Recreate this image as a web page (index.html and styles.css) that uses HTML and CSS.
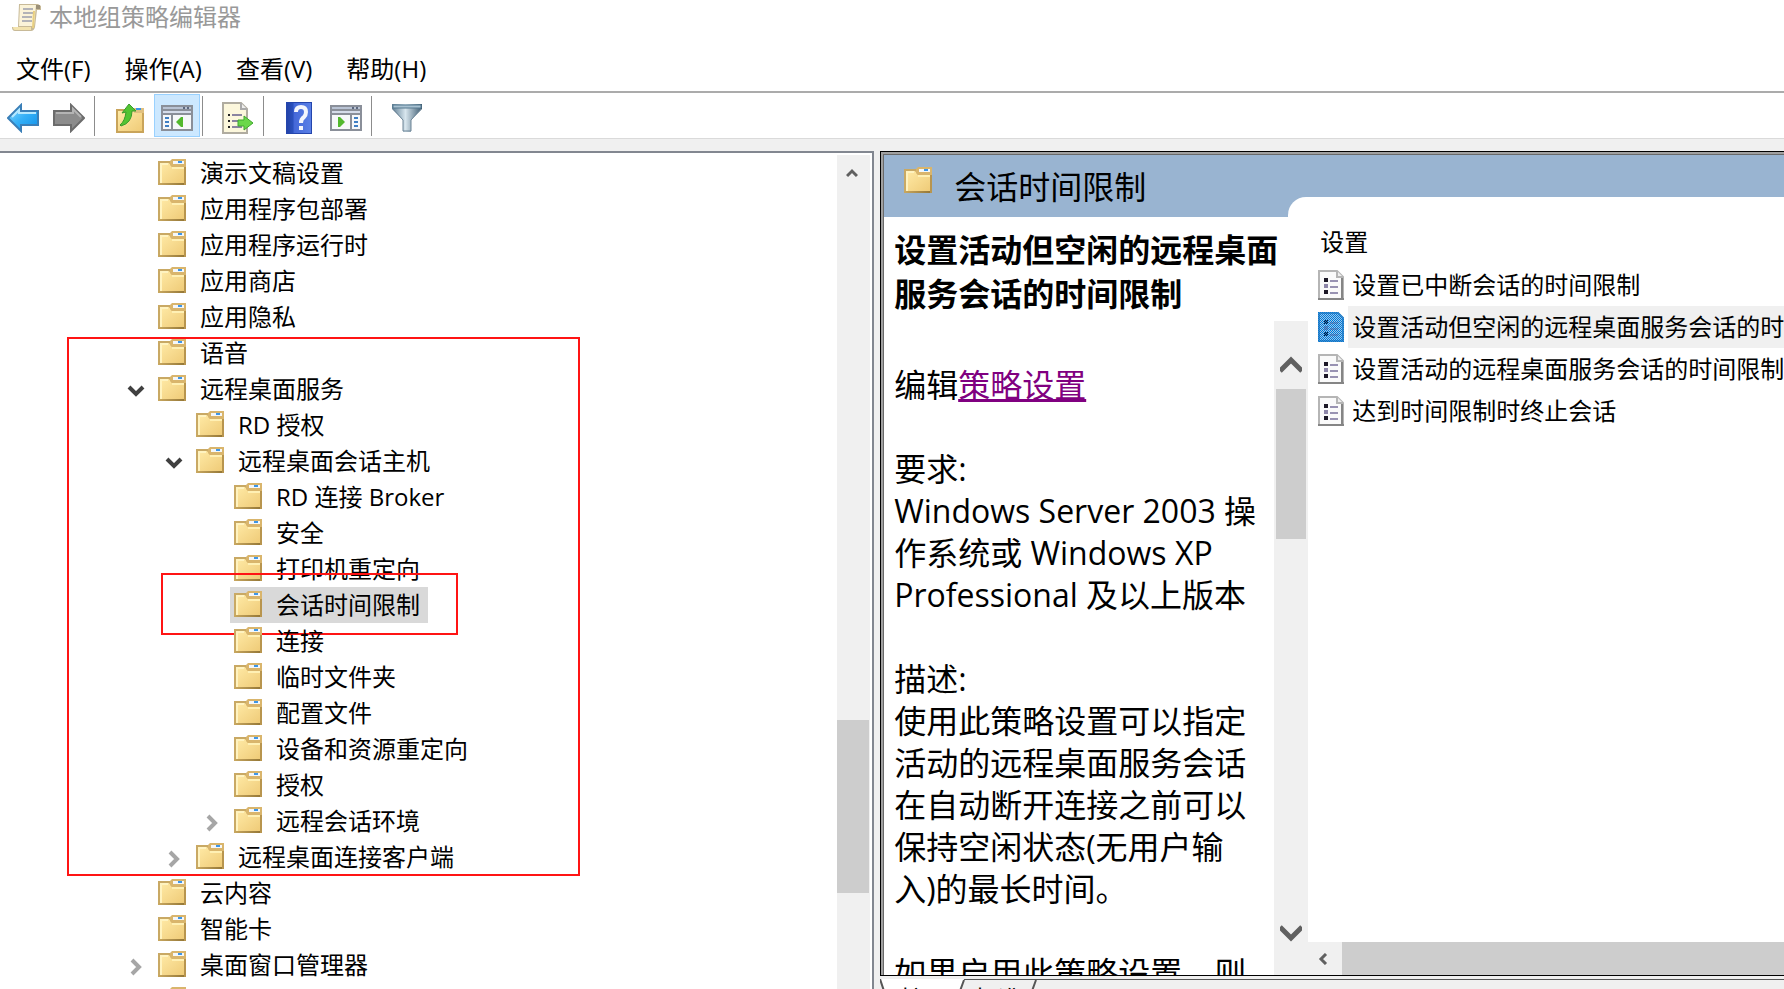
FILE: index.html
```
<!DOCTYPE html>
<html lang="zh-CN">
<head>
<meta charset="utf-8">
<title>本地组策略编辑器</title>
<link rel="stylesheet" href="styles.css">
</head>
<body>
<svg class="defs" aria-hidden="true">
  <defs>
    <linearGradient id="gFolder" x1="0" y1="0" x2="1" y2="1"><stop offset="0" stop-color="#ffeaa6"/><stop offset="1" stop-color="#efcb78"/></linearGradient>
    <linearGradient id="gEdge" x1="0" y1="0" x2="1" y2="0"><stop offset="0" stop-color="#c9a860"/><stop offset="1" stop-color="#917434"/></linearGradient>
    <linearGradient id="gBlue" x1="0" y1="0" x2="1" y2="1"><stop offset="0" stop-color="#8fdcff"/><stop offset=".5" stop-color="#35b0f7"/><stop offset="1" stop-color="#0f8fe8"/></linearGradient>
    <linearGradient id="gHelp" x1="0" y1="0" x2="1" y2="0"><stop offset="0" stop-color="#2343a8"/><stop offset=".25" stop-color="#2a50bd"/><stop offset=".3" stop-color="#4468d8"/><stop offset="1" stop-color="#5a80e6"/></linearGradient>
    <linearGradient id="gSteel" x1="0" y1="0" x2="1" y2="0"><stop offset="0" stop-color="#5f7e94"/><stop offset=".45" stop-color="#d8e6ee"/><stop offset="1" stop-color="#3c5a70"/></linearGradient>
    <symbol id="folder" viewBox="0 0 28 26">
      <path d="M0 2H12V6H28V26H0Z" fill="#c9a964"/>
      <path d="M2 4H11L14 8H26V24H2Z" fill="url(#gFolder)"/>
      <path d="M2 4H10V6H4V24H2Z" fill="#fff3c0"/>
      <path d="M12 2L14 0H28V8H14L12 6Z" fill="#d9b56c"/>
      <path d="M15 2H26V5H15Z" fill="#f5f7f8"/><path d="M20 2H24V4H20Z" fill="#3d96e8"/>
      <path d="M14 8H26V10H14Z" fill="#fff0b4"/>
      <path d="M0 24H28V26H0Z" fill="url(#gEdge)"/><path d="M26 8H28V26H26Z" fill="#b8954e"/>
    </symbol>
    <symbol id="down" viewBox="0 0 18 12"><path d="M2 2L9 9L16 2" fill="none" stroke="#404040" stroke-width="4"/></symbol>
    <symbol id="right" viewBox="0 0 12 18"><path d="M2 2L9 9L2 16" fill="none" stroke="#a6a6a6" stroke-width="4"/></symbol>
    <symbol id="sheet" viewBox="0 0 26 30">
      <path d="M1 1H19L25 7V29H1Z" fill="#fafafa" stroke="#b5b5b5" stroke-width="2"/>
      <path d="M24 7V29M0 29H26" fill="none" stroke="#858585" stroke-width="2"/>
      <path d="M19 1V7H25" fill="#eee" stroke="#b5b5b5" stroke-width="2"/>
      <path d="M6 8H10V12H6ZM6 20H10V24H6Z" fill="#1c1826"/><path d="M6 14H10V18H6Z" fill="#8d86a8"/>
      <path d="M12 11H20M12 17H20M12 23H20" stroke="#9892b2" stroke-width="2"/>
    </symbol>
    <pattern id="dither" width="2" height="2" patternUnits="userSpaceOnUse"><path d="M0 0H1V1H0ZM1 1H2V2H1Z" fill="#0078d7"/></pattern>
    <symbol id="sheetOn" viewBox="0 0 26 30">
      <path d="M0 0H20L26 6V30H0Z" fill="#9cc8ea"/>
      <path d="M1 1H20L25 6V29H1Z" fill="none" stroke="#4a8cc4" stroke-width="2"/>
      <path d="M6 8H10V12H6ZM6 20H10V24H6Z" fill="#1c1826"/><path d="M6 14H10V18H6Z" fill="#8d86a8"/>
      <path d="M12 11H20M12 17H20M12 23H20" stroke="#9892b2" stroke-width="2"/>
      <path d="M0 0H20L26 6V30H0Z" fill="url(#dither)"/>
    </symbol>
    <symbol id="frame" viewBox="0 0 32 26">
      <path d="M0 0H32V26H0Z" fill="#8a8f99"/><path d="M2 2H30V4H2Z" fill="#b9c3d4"/>
      <path d="M22 2H24V4H22ZM26 2H28V4H26Z" fill="#5c6880"/>
      <path d="M2 6H30V8H2Z" fill="#d5dcea"/><path d="M2 10H30V24H2Z" fill="#f6f8fa"/>
    </symbol>
  </defs>
</svg>

<div class="window">
  <header class="titlebar">
    <svg class="app-icon" width="30" height="30" viewBox="0 0 30 30" aria-hidden="true">
      <path d="M7 2H26L29 4V8H25L23 25Q22 29 19 29H3Q0 29 0 25H6Z" fill="#c8ba98"/>
      <path d="M8 3H24L22 24H7Z" fill="#fbf3d8"/>
      <path d="M11 7H21M11 11H21M10 15H20M10 19H20" stroke="#b3b3b8" stroke-width="2"/>
      <path d="M1 25H19V28H3Q1 28 1 25Z" fill="#f3e3ae"/><path d="M24 3L28 3V7H24Z" fill="#9b9078"/>
      <path d="M22 9L21 26" stroke="#e8cf80" stroke-width="2"/>
    </svg>
    <h1>本地组策略编辑器</h1>
  </header>
  <nav class="menubar">
    <button>文件(F)</button><button>操作(A)</button><button>查看(V)</button><button>帮助(H)</button>
  </nav>
  <div class="toolbar" role="toolbar">
    <button aria-label="后退"><svg width="32" height="30" viewBox="0 0 32 30"><path d="M1 15L14 2V8H31V22H14V28Z" fill="url(#gBlue)" stroke="#3a7fb8" stroke-width="2"/><path d="M5 14L12 7V10H29" fill="none" stroke="#b6e8ff" stroke-width="2"/></svg></button>
    <button aria-label="前进"><svg width="32" height="30" viewBox="0 0 32 30"><path d="M31 15L18 2V8H1V22H18V28Z" fill="#8c8c8c" stroke="#6c6c6c" stroke-width="2"/><path d="M3 10H20V6L28 14" fill="none" stroke="#b4b4b4" stroke-width="2"/></svg></button>
    <span class="sep"></span>
    <button aria-label="上一级"><svg width="28" height="30" viewBox="0 0 28 30"><path d="M0 6H28V30H0Z" fill="#c9a45a"/><path d="M2 8H26V28H2Z" fill="url(#gFolder)"/><path d="M18 5H28V10H18Z" fill="#e0c080"/><path d="M20 5H25V7H20Z" fill="#3d96e8"/><path d="M4 22Q9 18 10 9L6 10L13 1L20 8L16 8Q16 20 5 23Z" fill="#52c432" stroke="#3a9a2c"/></svg></button>
    <button class="on" aria-label="显示控制台树" aria-pressed="true"><svg width="32" height="26" viewBox="0 0 32 26"><use href="#frame"/><path d="M10 10H12V24H10Z" fill="#8a8f99"/><path d="M4 13H8M4 17H8M4 21H8" stroke="#3f7fc4" stroke-width="2"/><path d="M22 12V22H20L15 17L20 12Z" fill="#52b82e"/></svg></button>
    <span class="sep"></span>
    <button aria-label="导出列表"><svg width="32" height="32" viewBox="0 0 32 32"><path d="M1 1H19L25 7V31H1Z" fill="#fcf7dc" stroke="#b0aca0" stroke-width="2"/><path d="M19 1V7H25" fill="#eee" stroke="#aaa" stroke-width="2"/><path d="M6 12H8V14H6ZM6 18H8V20H6ZM6 24H8V26H6Z" fill="#222"/><path d="M10 13H20M10 19H18M10 25H20" stroke="#8a84a0" stroke-width="2"/><path d="M16 18H22V14L31 21L22 28V24H16Z" fill="#6bd84a" stroke="#3fa82e"/></svg></button>
    <span class="sep"></span>
    <button aria-label="帮助"><svg width="26" height="32" viewBox="0 0 26 32"><path d="M0 0H26V32H0Z" fill="#2445ac"/><path d="M1 1H25V31H1Z" fill="url(#gHelp)"/><path d="M10 10Q10 5 15 5Q20 5 20 10Q20 13 18 15Q15 17 15 21" fill="none" stroke="#f4f6fc" stroke-width="4"/><path d="M13 24H17V28H13Z" fill="#f4f6fc"/></svg></button>
    <button aria-label="显示操作窗格"><svg width="32" height="26" viewBox="0 0 32 26"><use href="#frame"/><path d="M20 10H22V24H20Z" fill="#8a8f99"/><path d="M24 13H28M24 17H28M24 21H28" stroke="#3f7fc4" stroke-width="2"/><path d="M8 12V22H10L15 17L10 12Z" fill="#52b82e"/></svg></button>
    <span class="sep"></span>
    <button aria-label="筛选器"><svg width="30" height="28" viewBox="0 0 30 28"><path d="M0 0H30V5L19 16V28H11V16L0 5Z" fill="url(#gSteel)"/><path d="M1 1H29V4H1Z" fill="#a9c2d2" stroke="#55788f"/><path d="M1 5L11 16V27H19V16L29 5" fill="none" stroke="#6c8496"/></svg></button>
  </div>

  <main class="body">
    <section class="tree-pane">
      <div class="tree-view">
        <ul class="tree">
          <li><div class="row"><svg class="folder"><use href="#folder"/></svg><span>演示文稿设置</span></div></li>
          <li><div class="row"><svg class="folder"><use href="#folder"/></svg><span>应用程序包部署</span></div></li>
          <li><div class="row"><svg class="folder"><use href="#folder"/></svg><span>应用程序运行时</span></div></li>
          <li><div class="row"><svg class="folder"><use href="#folder"/></svg><span>应用商店</span></div></li>
          <li><div class="row"><svg class="folder"><use href="#folder"/></svg><span>应用隐私</span></div></li>
          <li><div class="row"><svg class="folder"><use href="#folder"/></svg><span>语音</span></div></li>
          <li><div class="row"><button class="toggle" aria-label="折叠"><svg width="18" height="12"><use href="#down"/></svg></button><svg class="folder"><use href="#folder"/></svg><span>远程桌面服务</span></div>
            <ul>
              <li><div class="row"><svg class="folder"><use href="#folder"/></svg><span>RD 授权</span></div></li>
              <li><div class="row"><button class="toggle" aria-label="折叠"><svg width="18" height="12"><use href="#down"/></svg></button><svg class="folder"><use href="#folder"/></svg><span>远程桌面会话主机</span></div>
                <ul>
                  <li><div class="row"><svg class="folder"><use href="#folder"/></svg><span>RD 连接 Broker</span></div></li>
                  <li><div class="row"><svg class="folder"><use href="#folder"/></svg><span>安全</span></div></li>
                  <li><div class="row"><svg class="folder"><use href="#folder"/></svg><span>打印机重定向</span></div></li>
                  <li><div class="row selected"><svg class="folder"><use href="#folder"/></svg><span>会话时间限制</span><i class="mark mark-item"></i></div></li>
                  <li><div class="row"><svg class="folder"><use href="#folder"/></svg><span>连接</span></div></li>
                  <li><div class="row"><svg class="folder"><use href="#folder"/></svg><span>临时文件夹</span></div></li>
                  <li><div class="row"><svg class="folder"><use href="#folder"/></svg><span>配置文件</span></div></li>
                  <li><div class="row"><svg class="folder"><use href="#folder"/></svg><span>设备和资源重定向</span></div></li>
                  <li><div class="row"><svg class="folder"><use href="#folder"/></svg><span>授权</span></div></li>
                  <li><div class="row"><button class="toggle" aria-label="展开"><svg width="12" height="18"><use href="#right"/></svg></button><svg class="folder"><use href="#folder"/></svg><span>远程会话环境</span></div></li>
                </ul>
              </li>
              <li><div class="row"><button class="toggle" aria-label="展开"><svg width="12" height="18"><use href="#right"/></svg></button><svg class="folder"><use href="#folder"/></svg><span>远程桌面连接客户端</span></div></li>
            </ul>
          </li>
          <li><div class="row"><svg class="folder"><use href="#folder"/></svg><span>云内容</span></div></li>
          <li><div class="row"><svg class="folder"><use href="#folder"/></svg><span>智能卡</span></div></li>
          <li><div class="row"><button class="toggle" aria-label="展开"><svg width="12" height="18"><use href="#right"/></svg></button><svg class="folder"><use href="#folder"/></svg><span>桌面窗口管理器</span></div></li>
          <li><div class="row"><svg class="folder"><use href="#folder"/></svg></div></li>
        </ul>
        <i class="mark mark-group"></i>
      </div>
      <div class="vscroll tree-scroll">
        <button aria-label="向上滚动"><svg width="12" height="10" viewBox="0 0 12 10"><path d="M1 8L6 3L11 8" fill="none" stroke="#606060" stroke-width="3"/></svg></button>
        <div class="thumb"></div>
      </div>
    </section>

    <section class="result-pane">
      <div class="frame">
        <div class="banner"><svg class="folder"><use href="#folder"/></svg><h2>会话时间限制</h2></div>
        <div class="content">
          <article class="detail">
            <h3>设置活动但空闲的远程桌面<br>服务会话的时间限制</h3>
            <div class="detail-body">
              <div class="detail-text">
                <p>编辑<a href="#edit">策略设置</a></p>
                <p>要求:<br>Windows Server 2003 操<br>作系统或 Windows XP<br>Professional 及以上版本</p>
                <p>描述:<br>使用此策略设置可以指定<br>活动的远程桌面服务会话<br>在自动断开连接之前可以<br>保持空闲状态(无用户输<br>入)的最长时间。</p>
                <p>如果启用此策略设置，则</p>
              </div>
              <div class="vscroll detail-scroll">
                <button aria-label="向上滚动"><svg width="22" height="18" viewBox="0 0 22 18"><path d="M0 15L11 4L22 15" fill="none" stroke="#606060" stroke-width="5"/></svg></button>
                <div class="thumb"></div>
                <button aria-label="向下滚动"><svg width="22" height="18" viewBox="0 0 22 18"><path d="M0 3L11 14L22 3" fill="none" stroke="#606060" stroke-width="5"/></svg></button>
              </div>
            </div>
          </article>
          <div class="settings">
            <h4>设置</h4>
            <ul>
              <li><svg class="sheet"><use href="#sheet"/></svg><span>设置已中断会话的时间限制</span></li>
              <li class="selected"><svg class="sheet"><use href="#sheetOn"/></svg><span>设置活动但空闲的远程桌面服务会话的时间限制</span></li>
              <li><svg class="sheet"><use href="#sheet"/></svg><span>设置活动的远程桌面服务会话的时间限制</span></li>
              <li><svg class="sheet"><use href="#sheet"/></svg><span>达到时间限制时终止会话</span></li>
            </ul>
            <div class="hscroll">
              <button aria-label="向左滚动"><svg width="10" height="12" viewBox="0 0 10 12"><path d="M8 1L3 6L8 11" fill="none" stroke="#606060" stroke-width="3"/></svg></button>
              <div class="thumb"></div>
            </div>
          </div>
        </div>
      </div>
      <div class="tabs">
        <svg class="tab-shape" width="160" height="12" viewBox="0 0 160 12" aria-hidden="true">
          <path d="M0 0L4 12H80L84 0Z" fill="#fff"/>
          <path d="M0 0L4 12M80 12L84 1M156 1L152 12" fill="none" stroke="#555" stroke-width="2"/>
        </svg>
        <button>扩展</button><button>标准</button>
      </div>
    </section>
  </main>
</div>
</body>
</html>
```
FILE: styles.css
```
* { box-sizing: border-box; }
body {
  margin: 0;
  color: #000;
  background: #fff;
  font: 24px/36px "Open Sans", "Noto Sans CJK SC", sans-serif;
}
h1, h2, h3, h4, p, ul { margin: 0; padding: 0; font-weight: 400; font-size: inherit; }
ul { list-style: none; }
button { border: 0; padding: 0; background: none; font: inherit; color: inherit; }
svg { display: block; flex: none; }
.defs { position: absolute; width: 0; height: 0; }

.window { height: 100vh; display: flex; flex-direction: column; overflow: hidden; }

.titlebar { flex: none; display: flex; align-items: center; gap: 7px; height: 34px; padding-left: 12px; color: #999; }
.menubar { flex: none; display: flex; gap: 34px; padding: 14px 16px 1px; line-height: 42px; }
.toolbar {
  flex: none;
  display: flex;
  align-items: center;
  height: 48px;
  border-top: 2px solid #ababab;
  border-bottom: 1px solid #dadada;
}
.toolbar button { width: 46px; height: 43px; padding-top: 5px; display: grid; place-items: center; }
.toolbar button + button { margin-left: 1px; }
.toolbar button:first-child { width: 45px; }
.toolbar .on { background: #cce8ff; border: 1px solid #99d1ff; }
.sep { width: 1px; height: 40px; margin: 0 12px 0 2px; background: #8c8c8c; }

.body { flex: 1; min-height: 0; display: flex; gap: 6px; padding-top: 12px; background: #f0f0f0; }

.tree-pane {
  flex: 0 0 49%;
  display: flex;
  padding: 2px 2px 0 0;
  background: #fff;
  border: solid #828790;
  border-width: 2px 2px 0 0;
}
.tree-view { position: relative; flex: 1; overflow: hidden; padding-left: 120px; }
.tree ul { padding-left: 38px; }
.row { position: relative; display: flex; width: max-content; height: 36px; padding: 0 8px 0 4px; margin-left: 34px; }
.row .folder { margin: 4px 14px 0 0; }
.folder { width: 28px; height: 26px; }
.row.selected { background: #d9d9d9; }
.toggle { width: 34px; height: 40px; margin: 0 0 0 -34px; padding-right: 10px; display: grid; place-items: center; }
.mark { position: absolute; border: 2px solid #ff1414; pointer-events: none; }
.mark-group { left: 67px; top: 182px; width: 513px; height: 539px; }
.mark-item { left: -69px; top: -14px; width: 297px; height: 62px; }

.vscroll { flex: none; display: flex; flex-direction: column; background: #f0f0f0; }
.vscroll button { display: grid; place-items: center; }
.thumb { background: #cdcdcd; }
.tree-scroll { width: 33px; padding-right: 1px; }
.tree-scroll button { height: 36px; padding-right: 2px; }
.tree-scroll .thumb { height: 173px; margin-top: 529px; }

.result-pane { flex: 1; min-width: 0; display: flex; flex-direction: column; }
.frame {
  flex: 1;
  min-height: 0;
  display: flex;
  flex-direction: column;
  background: #fff;
  border: 1px solid #000;
  border-right: 0;
  box-shadow: inset 2px 2px #a0a0a0, inset 3px 3px #696969;
  padding: 3px 0 0 3px;
}
.banner { flex: none; display: flex; gap: 22px; height: 62px; padding: 12px 20px 0; background: #99b4d1; }
.banner h2 { font-size: 32px; line-height: 40px; }
.content { flex: 1; min-height: 0; display: flex; }
.detail { position: relative; z-index: 1; flex: 0 0 424px; min-height: 0; display: flex; flex-direction: column; padding-left: 10px; font-size: 32px; line-height: 42px; }
.detail h3 { flex: none; padding: 11px 0 5px; font-weight: 700; line-height: 44px; white-space: nowrap; }
.detail-body { flex: 1; min-height: 0; display: flex; }
.detail-text { flex: 1; min-width: 0; overflow: hidden; padding-top: 1px; white-space: nowrap; }
.detail-text p { padding-top: 42px; }
.detail a { color: #800080; }
.detail-scroll { width: 34px; padding: 2px; }
.detail-scroll button { height: 66px; padding-top: 18px; }
.detail-scroll button:last-child { height: 48px; padding: 0; margin: auto 0 16px; }
.detail-scroll .thumb { height: 150px; }

.settings {
  flex: 1;
  min-width: 0;
  display: flex;
  flex-direction: column;
  margin: -20px 0 0 -20px;
  padding: 24px 0 0 30px;
  background: #fff;
  border-top-left-radius: 18px;
  line-height: 42px;
  white-space: nowrap;
}
.settings h4 { padding: 0 0 1px 2px; }
.settings li { display: flex; align-items: center; height: 42px; }
.sheet { width: 26px; height: 30px; }
.settings li span { flex: 1; margin-left: 4px; padding-left: 4px; overflow: hidden; }
.settings .selected span { background: #f0f0f0; }
.hscroll { display: flex; height: 33px; margin: auto 0 0 -10px; background: #f0f0f0; }
.hscroll button { width: 34px; padding-right: 4px; display: grid; place-items: center; }
.hscroll .thumb { flex: 1; }

.tabs {
  position: relative;
  flex: none;
  display: flex;
  gap: 26px;
  height: 13px;
  padding: 10px 0 0 20px;
  overflow: hidden;
  line-height: 26px;
}
.tabs::before { content: ""; position: absolute; left: 84px; right: 0; top: 3px; height: 1px; background: #555; }
.tabs button { position: relative; height: 26px; }
.tab-shape { position: absolute; left: 0; top: 3px; }
```
